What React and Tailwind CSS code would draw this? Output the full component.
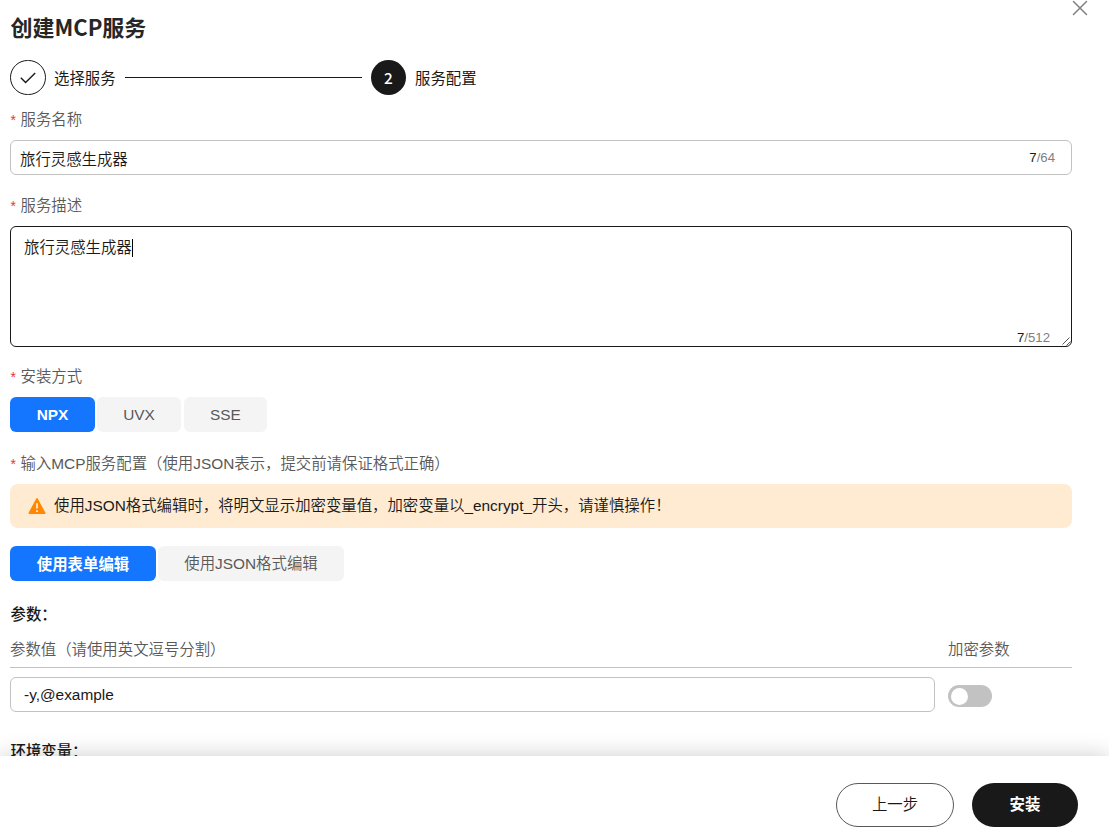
import React from "react";

function Label({ children, className = "" }) {
  return (
    <div className={`flex h-[22px] items-center whitespace-nowrap leading-[22px] text-[#595959] ${className}`}>
      <span className="w-[10.5px] shrink-0 pl-[0.5px] text-[14px] text-[#f23030]">*</span>
      <span>{children}</span>
    </div>
  );
}

function Tab({ active, children, className = "" }) {
  const look = active ? "bg-[#1476ff] text-white font-bold" : "bg-[#f4f4f4] text-[#595959]";
  return (
    <button className={`flex h-[35px] items-center justify-center whitespace-nowrap rounded-[6px] ${look} ${className}`}>
      {children}
    </button>
  );
}

function Counter({ value, max, className = "" }) {
  return (
    <span className={`text-[13.2px] leading-[16px] text-[#808080] ${className}`}>
      <span className="text-[#191919]">{value}</span>/{max}
    </span>
  );
}

export default function App() {
  return (
    <div className="relative flex h-[837px] w-[1109px] flex-col overflow-hidden bg-white font-['Liberation_Sans','Noto_Sans_CJK_SC',sans-serif] text-[15.4px] font-[350] text-[#191919]">
      <button aria-label="Close" className="absolute left-[1072px] top-0 h-4 w-4">
        <svg width="16" height="16" viewBox="0 0 16 16" fill="none" stroke="#808080" strokeWidth="1.5" strokeLinecap="round">
          <path d="M1.5 1.5 14.5 14.5M14.5 1.5 1.5 14.5" />
        </svg>
      </button>

      <main className="h-[756px] shrink-0 overflow-hidden pl-[10px] pr-[37px]">
        <h1 className="mt-[10px] h-[32px] whitespace-nowrap pl-[0.5px] font-['Noto_Sans_CJK_SC',sans-serif] text-[22px] font-bold leading-[32px] text-[#262626]">创建MCP服务</h1>

        <div className="mt-[18px] flex h-[35px] items-center whitespace-nowrap">
          <div className="flex h-[35px] w-[36px] shrink-0 items-center justify-center rounded-full border border-[#191919]">
            <svg width="16" height="12" viewBox="0 0 16 12" fill="none" stroke="#191919" strokeWidth="1.4">
              <path d="M.8 5.7 5.6 10.6 15.2 1.1" />
            </svg>
          </div>
          <span className="ml-[8px] w-[62px] pt-[2px] font-normal">选择服务</span>
          <span className="ml-[9px] h-px w-[237px] bg-[#191919]" />
          <div className="ml-[9px] flex h-[35px] w-[35px] shrink-0 items-center justify-center rounded-full bg-[#191919] font-['Noto_Sans_CJK_SC',sans-serif] font-medium text-white">2</div>
          <span className="ml-[9px] pt-[2px] font-normal">服务配置</span>
        </div>

        <Label className="mt-[14px]">服务名称</Label>
        <div className="mt-[9px] flex h-[35px] items-center justify-between rounded-[6px] border border-[#c2c2c2] pl-[9px] pr-[16px]">
          <span className="pt-[4px]">旅行灵感生成器</span>
          <Counter value="7" max="64" className="pt-px" />
        </div>

        <Label className="mt-[20px]">服务描述</Label>
        <div className="mt-[9px] flex h-[121px] flex-col justify-between rounded-[6px] border border-[#191919] pl-[13px]">
          <div className="mt-[10px] flex h-[22px] items-center">
            <span className="w-[108px] whitespace-nowrap">旅行灵感生成器</span>
            <span className="h-[18px] w-px bg-black" />
          </div>
          <div className="flex items-end justify-end">
            <Counter value="7" max="512" className="mr-[12px]" />
            <svg width="9" height="9" viewBox="0 0 9 9" stroke="#555" strokeWidth="1" fill="none">
              <path d="M.5 7.5 7.5.5M4.5 8.5 8.5 4.5" />
            </svg>
          </div>
        </div>

        <Label className="mt-[19px]">安装方式</Label>
        <div className="mt-[9px] flex">
          <Tab active className="w-[85px]">NPX</Tab>
          <Tab className="ml-[2px] w-[84px]">UVX</Tab>
          <Tab className="ml-[3px] w-[83px]">SSE</Tab>
        </div>

        <Label className="mt-[21px]">输入MCP服务配置（使用JSON表示，提交前请保证格式正确）</Label>
        <div className="mt-[9px] flex h-[44px] items-center whitespace-nowrap rounded-[8px] bg-[#ffebd1] pl-[18px]">
          <svg width="18" height="18" viewBox="0 0 18 18">
            <path d="M9 1.8 16.7 16.2H1.3Z" fill="#ff8800" stroke="#ff8800" strokeWidth="1.6" strokeLinejoin="round" />
            <path d="M9 6.2v5.4M9 13.2v1.7" stroke="#fff" strokeWidth="1.5" />
          </svg>
          <span className="ml-[8px]">使用JSON格式编辑时，将明文显示加密变量值，加密变量以_encrypt_开头，请谨慎操作！</span>
        </div>

        <div className="mt-[18px] flex">
          <Tab active className="w-[146px]"><span className="font-['Noto_Sans_CJK_SC',sans-serif]">使用表单编辑</span></Tab>
          <Tab className="ml-[2px] w-[186px]">使用JSON格式编辑</Tab>
        </div>

        <h2 className="mt-[21px] h-[22px] pl-[0.5px] font-['Noto_Sans_CJK_SC',sans-serif] font-medium leading-[22px]">参数：</h2>
        <div className="mt-[10px] flex h-[34px] border-b border-[#c2c2c2] pt-[5px] leading-[22px] text-[#595959]">
          <span className="w-[938px]">参数值（请使用英文逗号分割）</span>
          <span>加密参数</span>
        </div>
        <div className="mt-[9px] flex h-[35px] items-center">
          <div className="flex h-[35px] w-[925px] items-center rounded-[6px] border border-[#c2c2c2] pl-[13px]">-y,@example</div>
          <div className="ml-[13px] mt-[3px] flex h-[22px] w-[44px] items-center rounded-full bg-[#c2c2c2] pl-[3px]">
            <span className="h-[17px] w-[17px] rounded-full bg-white" />
          </div>
        </div>
        <h2 className="mt-[27px] h-[22px] pl-[0.5px] font-['Noto_Sans_CJK_SC',sans-serif] font-medium leading-[22px]">环境变量：</h2>
      </main>

      <footer className="relative flex h-[81px] shrink-0 items-start justify-end gap-[18px] bg-white pr-[31px] pt-[27px] shadow-[0_0_22px_rgba(0,0,0,0.2)]">
        <button className="flex h-[44px] w-[118px] items-center justify-center rounded-full border border-[#595959]">上一步</button>
        <button className="flex h-[44px] w-[106px] items-center justify-center rounded-full bg-[#191919] font-bold text-white">安装</button>
      </footer>
    </div>
  );
}
